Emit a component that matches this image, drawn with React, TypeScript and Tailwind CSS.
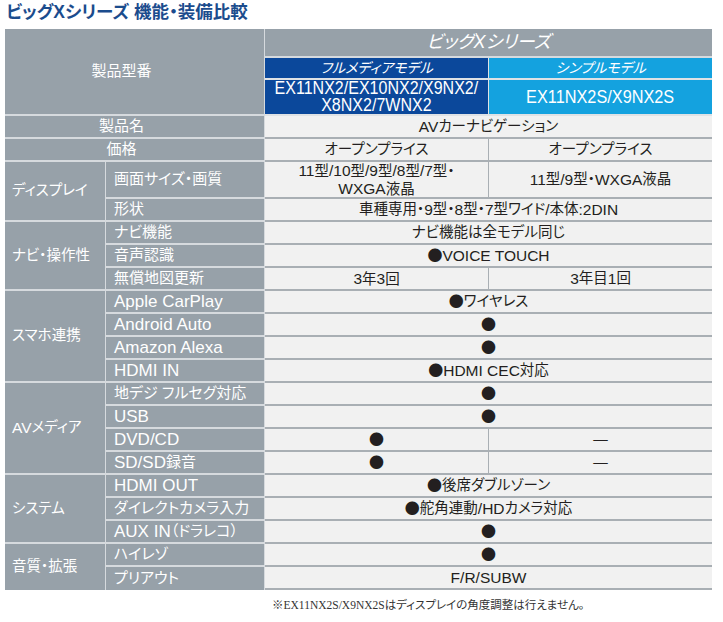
import React from 'react';

type Row = {
  label: string;
  a: string;
  b?: string; // when absent, a spans both model columns
  tall?: boolean;
};

type Group = { cat?: string; rows: Row[] };

const groups: Group[] = [
  {
    rows: [
      { label: '製品名', a: 'AVカーナビゲーション' },
      { label: '価格', a: 'オープンプライス', b: 'オープンプライス' },
    ],
  },
  {
    cat: 'ディスプレイ',
    rows: [
      { label: '画面サイズ・画質', a: '11型/10型/9型/8型/7型・\nWXGA液晶', b: '11型/9型・WXGA液晶', tall: true },
      { label: '形状', a: '車種専用・9型・8型・7型ワイド/本体:2DIN' },
    ],
  },
  {
    cat: 'ナビ・操作性',
    rows: [
      { label: 'ナビ機能', a: 'ナビ機能は全モデル同じ' },
      { label: '音声認識', a: '●VOICE TOUCH' },
      { label: '無償地図更新', a: '3年3回', b: '3年目1回' },
    ],
  },
  {
    cat: 'スマホ連携',
    rows: [
      { label: 'Apple CarPlay', a: '●ワイヤレス' },
      { label: 'Android Auto', a: '●' },
      { label: 'Amazon Alexa', a: '●' },
      { label: 'HDMI IN', a: '●HDMI CEC対応' },
    ],
  },
  {
    cat: 'AVメディア',
    rows: [
      { label: '地デジ フルセグ対応', a: '●' },
      { label: 'USB', a: '●' },
      { label: 'DVD/CD', a: '●', b: '—' },
      { label: 'SD/SD録音', a: '●', b: '—' },
    ],
  },
  {
    cat: 'システム',
    rows: [
      { label: 'HDMI OUT', a: '●後席ダブルゾーン' },
      { label: 'ダイレクトカメラ入力', a: '●舵角連動/HDカメラ対応' },
      { label: 'AUX IN（ドラレコ）', a: '●' },
    ],
  },
  {
    cat: '音質・拡張',
    rows: [
      { label: 'ハイレゾ', a: '●' },
      { label: 'プリアウト', a: 'F/R/SUBW' },
    ],
  },
];

const spanClass: Record<number, string> = {
  2: 'row-span-2',
  3: 'row-span-3',
  4: 'row-span-4',
};

// latin runs are set a bit larger than the kana/kanji, like the print original
function T({ s, latin = 'text-[15.5px]' }: { s: string; latin?: string }) {
  const parts = s.split(/(●|[\x21-\x7E]+(?: [\x21-\x7E]+)*)/);
  return (
    <>
      {parts.map((p, i) => {
        if (!p) return null;
        if (p === '●') {
          return (
            <span key={i} className="font-['Noto_Sans_CJK_JP',sans-serif] text-[15px]">
              ●
            </span>
          );
        }
        if (/^[\x20-\x7E]+$/.test(p)) {
          return (
            <span key={i} className={latin}>
              {p}
            </span>
          );
        }
        return <React.Fragment key={i}>{p}</React.Fragment>;
      })}
    </>
  );
}

const cellGray = 'bg-[#97a1a9] text-white border-[#d6dade]';
const cellBody = 'bg-[#f1f1f1] text-[#231f20] border-[#a9afb4]';

export default function App() {
  return (
    <div className="w-[723px] h-[622px] bg-white font-['Liberation_Sans','Noto_Sans_CJK_JP',sans-serif] [font-feature-settings:'palt'] text-[14.5px]">
      <h1 className="pl-[6px] h-[29px] text-[17.5px] leading-[25px] font-bold text-[#1b4c8d]">
        ビッグXシリーズ 機能・装備比較
      </h1>

      <div className="ml-[5px] grid grid-cols-[101px_159px_224px_223px]">
        {/* header */}
        <div className={`col-span-2 row-span-3 border-r border-b-2 flex items-center justify-center pr-[26px] text-[15px] ${cellGray}`}>
          製品型番
        </div>
        <div className={`col-span-2 h-[29px] border-b-2 flex items-center justify-center italic text-[18px] ${cellGray}`}>
          ビッグXシリーズ
        </div>
        <div className="h-[22px] bg-[#0b489b] text-white border-r border-b-2 border-[#dfe2e5] flex items-center justify-center italic text-[14px]">
          フルメディアモデル
        </div>
        <div className="h-[22px] bg-[#14a2df] text-white border-b-2 border-[#dfe2e5] flex items-center justify-center italic text-[14px]">
          シンプルモデル
        </div>
        <div className="h-[36px] bg-[#0b489b] text-white border-r border-b-2 border-[#dfe2e5] flex items-center justify-center">
          <div className="scale-x-[0.89] text-center text-[18px] leading-[17px] font-['Liberation_Sans',sans-serif]">
            EX11NX2/EX10NX2/X9NX2/
            <br />
            X8NX2/7WNX2
          </div>
        </div>
        <div className="h-[36px] bg-[#14a2df] text-white border-b-2 border-[#dfe2e5] flex items-center justify-center">
          <div className="scale-x-[0.88] text-[18.5px] leading-[20px] font-['Liberation_Sans',sans-serif]">
            EX11NX2S/X9NX2S
          </div>
        </div>

        {/* body */}
        {groups.map((g, gi) => {
          const lastGroup = gi === groups.length - 1;
          return (
            <React.Fragment key={gi}>
              {g.cat && (
                <div
                  className={`${spanClass[g.rows.length]} pl-[7px] flex items-center border-r ${lastGroup ? '' : 'border-b-2'} ${cellGray}`}
                >
                  <T s={g.cat} latin="text-[15.5px]" />
                </div>
              )}
              {g.rows.map((r, ri) => {
                const lastRow = lastGroup && ri === g.rows.length - 1;
                const h = r.tall ? 'h-[37px]' : 'h-[23px]';
                return (
                  <React.Fragment key={ri}>
                    {g.cat ? (
                      <div
                        className={`${h} pl-[8px] flex items-center text-[15px] border-r ${lastRow ? '' : 'border-b-2'} ${cellGray}`}
                      >
                        <T s={r.label} latin="text-[17px]" />
                      </div>
                    ) : (
                      <div className={`${h} col-span-2 pr-[26px] flex items-center justify-center text-[15px] border-r border-b-2 ${cellGray}`}>
                        {r.label}
                      </div>
                    )}
                    {r.b === undefined ? (
                      <div className={`${h} col-span-2 flex items-center justify-center border-b-2 ${cellBody}`}>
                        <T s={r.a} />
                      </div>
                    ) : (
                      <>
                        <div
                          className={`${h} flex items-center justify-center text-center whitespace-pre-line leading-[17px] border-r border-b-2 ${cellBody}`}
                        >
                          <span>
                            <T s={r.a} />
                          </span>
                        </div>
                        <div className={`${h} flex items-center justify-center border-b-2 ${cellBody}`}>
                          <T s={r.b} />
                        </div>
                      </>
                    )}
                  </React.Fragment>
                );
              })}
            </React.Fragment>
          );
        })}
      </div>

      <p className="pl-[272px] mt-[7px] text-[11.5px] leading-[16px] text-[#333] font-['Liberation_Serif','Noto_Sans_CJK_JP',serif]">
        ※EX11NX2S/X9NX2Sはディスプレイの角度調整は行えません。
      </p>
    </div>
  );
}
